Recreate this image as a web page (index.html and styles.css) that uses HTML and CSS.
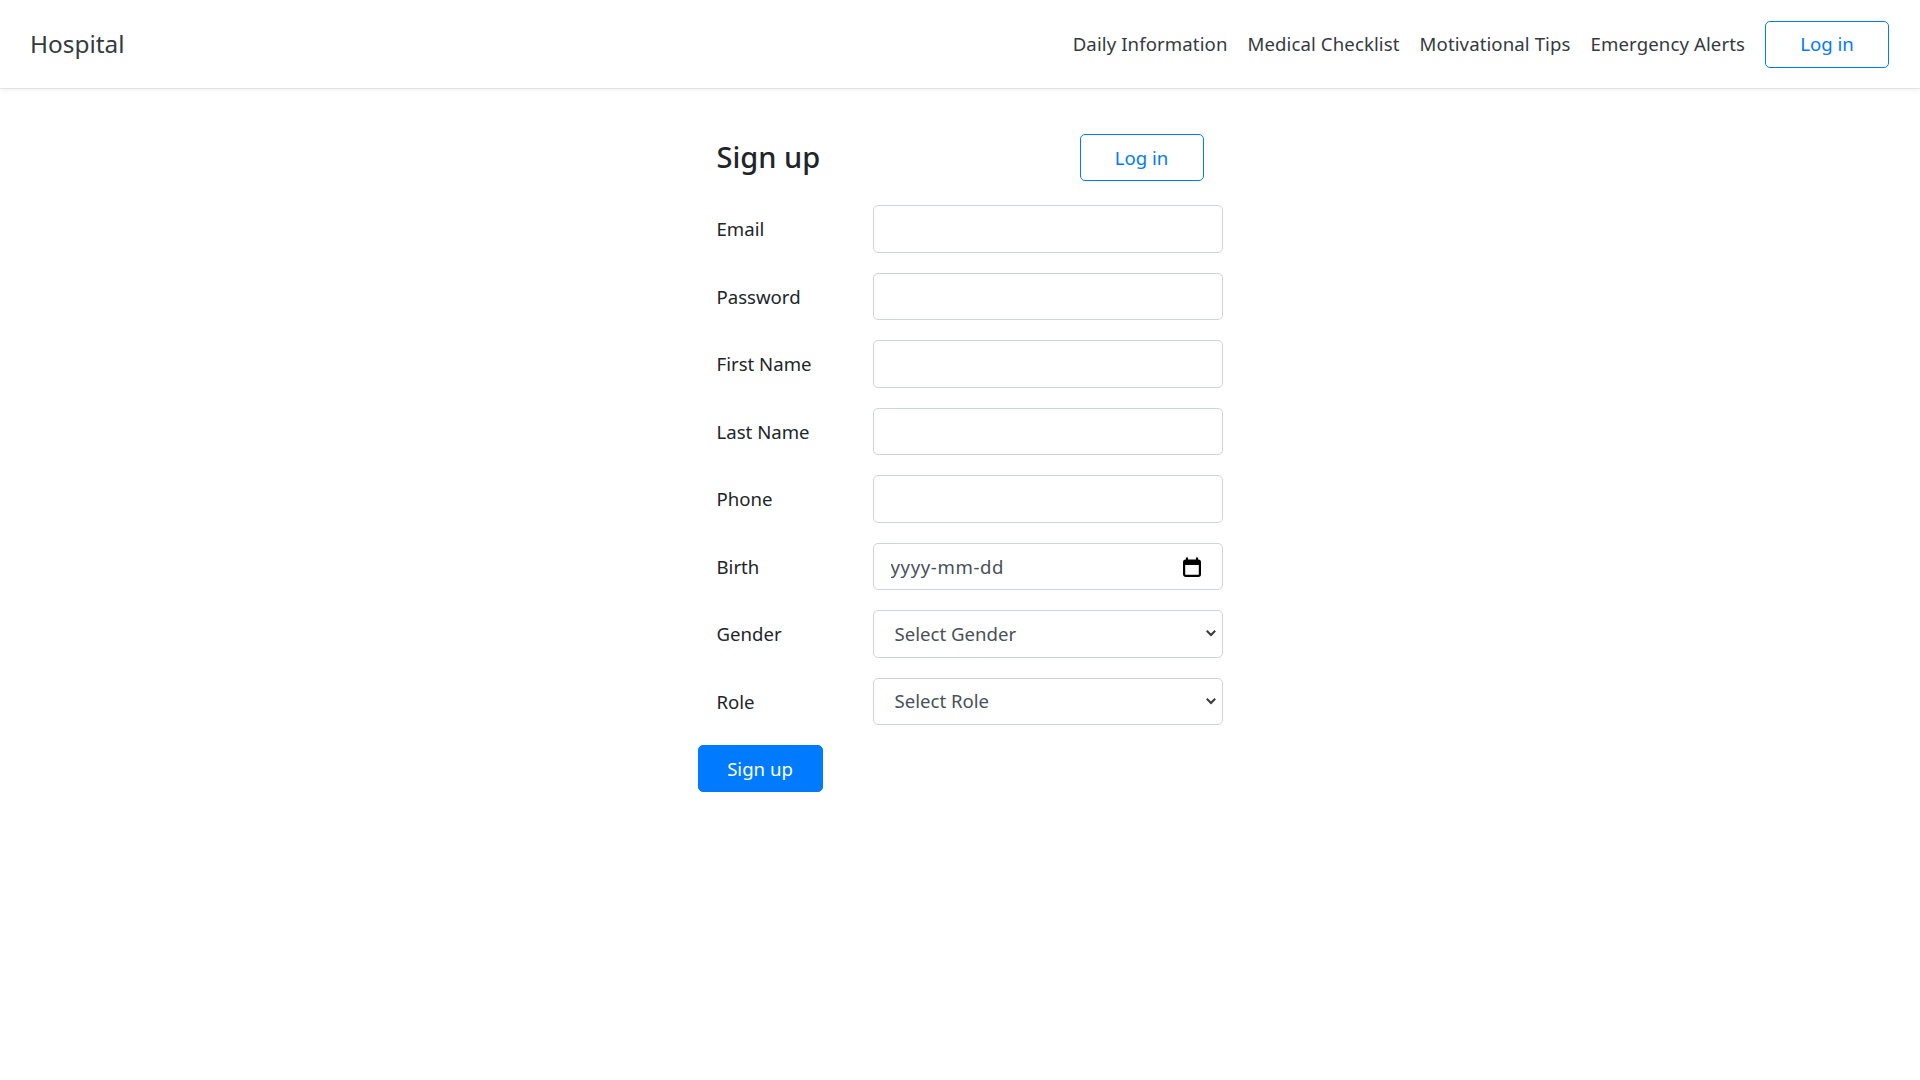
FILE: index.html
```html
<!DOCTYPE html>
<html lang="en">
<head>
<meta charset="utf-8">
<title>Hospital</title>
<link rel="stylesheet" href="styles.css">
</head>
<body>
<nav class="navbar">
  <a class="brand" href="#">Hospital</a>
  <div class="nav-links">
    <a class="nav-link" href="#">Daily Information</a>
    <a class="nav-link" href="#">Medical Checklist</a>
    <a class="nav-link" href="#">Motivational Tips</a>
    <a class="nav-link" href="#">Emergency Alerts</a>
  </div>
  <button class="btn btn-outline nav-btn" type="button">Log in</button>
</nav>

<main class="signup">
  <div class="signup-head">
    <h4 class="title">Sign up</h4>
    <button class="btn btn-outline" type="button">Log in</button>
  </div>
  <form class="form">
    <div class="form-row">
      <label class="label" for="email">Email</label>
      <input class="control" id="email" type="text">
    </div>
    <div class="form-row">
      <label class="label" for="password">Password</label>
      <input class="control" id="password" type="password">
    </div>
    <div class="form-row">
      <label class="label" for="first">First Name</label>
      <input class="control" id="first" type="text">
    </div>
    <div class="form-row">
      <label class="label" for="last">Last Name</label>
      <input class="control" id="last" type="text">
    </div>
    <div class="form-row">
      <label class="label" for="phone">Phone</label>
      <input class="control" id="phone" type="text">
    </div>
    <div class="form-row">
      <label class="label" for="birth">Birth</label>
      <div class="field">
        <input class="control date" id="birth" type="text" placeholder="yyyy-mm-dd">
        <svg class="cal-icon" width="20" height="20" viewBox="0 0 20 20" aria-hidden="true">
          <path d="M5 0.5v4M15 0.5v4" stroke="#000" stroke-width="2.2"/>
          <rect x="2.1" y="3.6" width="15.8" height="15.3" rx="1.6" fill="none" stroke="#000" stroke-width="2.2"/>
          <rect x="2" y="3.5" width="16" height="4.5" fill="#000"/>
        </svg>
      </div>
    </div>
    <div class="form-row">
      <label class="label" for="gender">Gender</label>
      <div class="field">
        <select class="control select" id="gender">
          <option>Select Gender</option>
          <option>Male</option>
          <option>Female</option>
        </select>
        <svg class="chev" width="12" height="8" viewBox="0 0 12 8" aria-hidden="true">
          <path d="M1.8 1.8l4.2 4.2 4.2-4.2" fill="none" stroke="#3a3a3a" stroke-width="2"/>
        </svg>
      </div>
    </div>
    <div class="form-row">
      <label class="label" for="role">Role</label>
      <div class="field">
        <select class="control select" id="role">
          <option>Select Role</option>
          <option>Patient</option>
          <option>Doctor</option>
        </select>
        <svg class="chev" width="12" height="8" viewBox="0 0 12 8" aria-hidden="true">
          <path d="M1.8 1.8l4.2 4.2 4.2-4.2" fill="none" stroke="#3a3a3a" stroke-width="2"/>
        </svg>
      </div>
    </div>
    <button class="btn btn-primary" type="submit">Sign up</button>
  </form>
</main>
</body>
</html>
```

FILE: styles.css
```css
* { box-sizing: border-box; }

body {
  margin: 0;
  font-family: "Noto Sans", "Open Sans", "Liberation Sans", sans-serif;
  font-size: 18.6px;
  line-height: 1.5;
  color: #212529;
  background: #fff;
}

.navbar {
  display: flex;
  align-items: center;
  height: 88px;
  padding: 0 31px 0 30px;
  background: #fff;
  box-shadow: 0 1px 0 rgba(0,0,0,0.08), 0 2px 6px rgba(0,0,0,0.06);
}

.brand {
  font-size: 24.4px;
  color: #343a40;
  text-decoration: none;
  margin-right: auto;
}

.nav-links {
  display: flex;
}

.nav-link {
  padding: 0 10px;
  color: #343a40;
  text-decoration: none;
  letter-spacing: 0.1px;
}

.btn {
  font-family: inherit;
  font-size: 18.6px;
  line-height: 1.5;
  height: 47px;
  width: 124px;
  border-radius: 5px;
  cursor: pointer;
  padding: 0;
}

.btn-outline {
  background: #fff;
  color: #007bff;
  border: 1px solid #007bff;
}

.nav-btn {
  margin-left: 10px;
}

.btn-primary {
  background: #007bff;
  color: #fff;
  border: 1px solid #007bff;
  width: 125px;
}

.signup {
  width: 525px;
  margin: 46px auto 0;
}

.signup-head {
  display: flex;
  align-items: center;
  justify-content: space-between;
  height: 47px;
  padding: 0 19px;
  margin-bottom: 24px;
}

.title {
  margin: 0;
  font-size: 29px;
  font-weight: 500;
  line-height: 1.2;
  color: #212529;
}

.form-row {
  display: grid;
  grid-template-columns: 175px 350px;
  align-items: center;
  margin-bottom: 20px;
}

.label {
  padding-left: 19px;
  padding-top: 1px;
  color: #212529;
}

.field {
  position: relative;
}

.control {
  display: block;
  width: 350px;
  height: 47.5px;
  padding: 7px 15px;
  font-family: inherit;
  font-size: 18.6px;
  line-height: 1.5;
  color: #495057;
  background: #fff;
  border: 1px solid #ced4da;
  border-radius: 5px;
  outline: none;
}

.date {
  padding-left: 17px;
  letter-spacing: 0.6px;
}

.date::placeholder {
  color: #495057;
  opacity: 1;
}

.select {
  appearance: none;
  -webkit-appearance: none;
  padding-left: 21px;
}

.cal-icon {
  position: absolute;
  right: 21px;
  top: 14px;
  pointer-events: none;
}

.chev {
  position: absolute;
  right: 6px;
  top: 19px;
  pointer-events: none;
}
```
